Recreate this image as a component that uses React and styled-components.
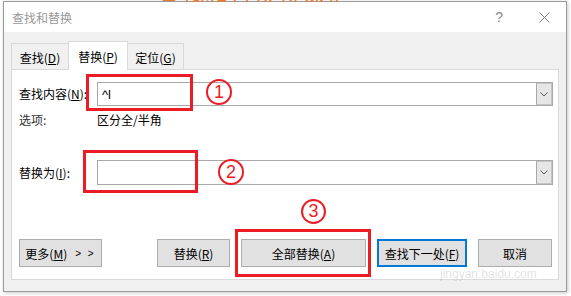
import React from "react"
import styled, { createGlobalStyle } from "styled-components"

const GlobalStyle = createGlobalStyle`
  html, body { margin: 0; padding: 0; background: #fff; }
  body {
    font-family: "Noto Sans CJK SC", "Noto Sans", sans-serif;
    font-size: 12px;
    color: #000;
  }
`

const Page = styled.div`
  position: relative;
  width: 571px;
  height: 296px;
  overflow: hidden;
  padding: 1px 0 0 3px;
  box-sizing: border-box;
`

// page text behind the dialog, only its lowest pixels peek out
const Headline = styled.div`
  position: absolute;
  left: 158px;
  top: 0;
  width: 180px;
  height: 2px;
  overflow: hidden;
  z-index: 3;
`

const HeadlineText = styled.div`
  margin-top: -19px;
  font-size: 22px;
  line-height: 22px;
  letter-spacing: 2px;
  color: #e8782e;
  white-space: nowrap;
`

const Dialog = styled.div`
  width: 564px;
  height: 291px;
  box-sizing: border-box;
  border: 1px solid #9a9a9a;
  box-shadow: 1px 1px 4px rgba(0, 0, 0, 0.22);
  display: flex;
  flex-direction: column;
  background: #f0f0f0;
`

const TitleBar = styled.div`
  height: 30px;
  background: #fff;
  display: flex;
  align-items: center;
  padding: 0 16px 0 8px;
  color: #999;
  font-size: 12px;
`

const TitleText = styled.span`
  flex: 1;
`

const Help = styled.span`
  font-family: "Liberation Sans", sans-serif;
  font-size: 14px;
  color: #8a8a8a;
  margin-right: 36px;
`

const Body = styled.div`
  flex: 1;
  display: flex;
  flex-direction: column;
  padding: 11px 7px 11px 7px;
`

const TabRow = styled.div`
  height: 26px;
  display: flex;
  align-items: flex-end;
`

const Tab = styled.div`
  position: relative;
  box-sizing: border-box;
  width: ${p => p.$w}px;
  height: ${p => (p.$active ? 29 : 26)}px;
  margin-bottom: ${p => (p.$active ? -1 : 0)}px;
  margin-left: ${p => (p.$first ? 0 : -1)}px;
  z-index: ${p => (p.$active ? 2 : 1)};
  border: 1px solid #d9d9d9;
  border-bottom: none;
  background: ${p => (p.$active ? "#fff" : "#f0f0f0")};
  display: flex;
  align-items: center;
  justify-content: center;
  padding-top: ${p => (p.$active ? 0 : 1)}px;
`

const Key = styled.span`
  text-decoration: underline;
  text-underline-offset: 1px;
`

const Panel = styled.div`
  height: 211px;
  box-sizing: border-box;
  background: #fff;
  border: 1px solid #d9d9d9;
  padding: 12px 5px 0 7px;
  display: flex;
  flex-direction: column;
`

const FieldRow = styled.div`
  display: grid;
  grid-template-columns: 78px 1fr;
  align-items: center;
  margin-top: ${p => p.$top || 0}px;
`

const Label = styled.span`
  color: ${p => p.$muted ? "#333" : "#000"};
  line-height: 14px;
`

const Combo = styled.div`
  height: ${p => p.$h}px;
  box-sizing: border-box;
  border: 1px solid #a8a8a8;
  display: flex;
  align-items: stretch;
`

const ComboText = styled.div`
  flex: 1;
  padding-left: 4px;
  display: flex;
  align-items: center;
  font-family: "Liberation Sans", sans-serif;
  font-size: 13px;
`

const DropButton = styled.div`
  width: 16px;
  box-sizing: border-box;
  background: #e6e6e6;
  border: 1px solid #c4c4c4;
  border-left: 1px solid #a8a8a8;
  display: flex;
  align-items: center;
  justify-content: center;
`

const ButtonRow = styled.div`
  display: flex;
  gap: 11px;
  margin-top: 54px;
  padding-right: 1px;
`

const Button = styled.div`
  width: ${p => p.$w}px;
  height: 28px;
  box-sizing: border-box;
  background: #e1e1e1;
  border: ${p => (p.$primary ? "2px solid #0078d7" : "1px solid #adadad")};
  display: flex;
  align-items: center;
  justify-content: center;
  margin-right: ${p => (p.$push ? "auto" : "0")};
  white-space: nowrap;
`

const Arrows = styled.span`
  font-family: "Liberation Sans", sans-serif;
  font-size: 10px;
  margin-left: 8px;
  letter-spacing: 2px;
`

const Mark = styled.div`
  position: absolute;
  left: ${p => p.$x}px;
  top: ${p => p.$y}px;
  width: ${p => p.$w}px;
  height: ${p => p.$h}px;
  box-sizing: border-box;
  border: 3px solid #ec1c24;
  z-index: 4;
`

const Step = styled.div`
  position: absolute;
  left: ${p => p.$x}px;
  top: ${p => p.$y}px;
  width: ${p => p.$d}px;
  height: ${p => p.$d}px;
  box-sizing: border-box;
  border: 2px solid #ec1c24;
  border-radius: 50%;
  color: #ec1c24;
  font-family: "Liberation Sans", sans-serif;
  font-size: 18px;
  display: flex;
  align-items: center;
  justify-content: center;
  z-index: 4;
`

const Watermark = styled.div`
  position: absolute;
  left: 440px;
  top: 268px;
  z-index: 5;
  color: rgba(170, 170, 170, 0.35);
  font-family: "Liberation Sans", sans-serif;
  font-size: 12px;
  line-height: 12px;
  pointer-events: none;
`

const Chevron = () => (
  <svg width="8" height="5" viewBox="0 0 8 5">
    <path d="M0.5 0.5 L4 4 L7.5 0.5" fill="none" stroke="#555" strokeWidth="1" />
  </svg>
)

const Close = () => (
  <svg width="11" height="11" viewBox="0 0 11 11">
    <path d="M0.5 0.5 L10.5 10.5 M10.5 0.5 L0.5 10.5" stroke="#777" strokeWidth="1" />
  </svg>
)

export default function App() {
  return (
    <>
      <GlobalStyle />
      <Page>
        <Headline><HeadlineText>查找和替换特殊格式的符号</HeadlineText></Headline>
        <Dialog>
          <TitleBar>
            <TitleText>查找和替换</TitleText>
            <Help>?</Help>
            <Close />
          </TitleBar>
          <Body>
            <TabRow>
              <Tab $w={58} $first>查找(<Key>D</Key>)</Tab>
              <Tab $w={60} $active>替换(<Key>P</Key>)</Tab>
              <Tab $w={57}>定位(<Key>G</Key>)</Tab>
            </TabRow>
            <Panel>
              <FieldRow>
                <Label>查找内容(<Key>N</Key>):</Label>
                <Combo $h={24}>
                  <ComboText>^l</ComboText>
                  <DropButton><Chevron /></DropButton>
                </Combo>
              </FieldRow>
              <FieldRow $top={7}>
                <Label $muted>选项:</Label>
                <Label>区分全/半角</Label>
              </FieldRow>
              <FieldRow $top={33}>
                <Label>替换为(<Key>I</Key>):</Label>
                <Combo $h={25}>
                  <ComboText />
                  <DropButton><Chevron /></DropButton>
                </Combo>
              </FieldRow>
              <ButtonRow>
                <Button $w={83} $push>更多(<Key>M</Key>)<Arrows>&gt; &gt;</Arrows></Button>
                <Button $w={73}>替换(<Key>R</Key>)</Button>
                <Button $w={125}>全部替换(<Key>A</Key>)</Button>
                <Button $w={90} $primary>查找下一处(<Key>F</Key>)</Button>
                <Button $w={74}>取消</Button>
              </ButtonRow>
            </Panel>
          </Body>
        </Dialog>

        <Mark $x={86} $y={74} $w={107} $h={37} />
        <Mark $x={83} $y={150} $w={115} $h={43} />
        <Mark $x={235} $y={229} $w={136} $h={48} />
        <Step $x={206} $y={79} $d={26}>1</Step>
        <Step $x={218} $y={159} $d={26}>2</Step>
        <Step $x={301} $y={199} $d={25}>3</Step>

        <Watermark>jingyan.baidu.com</Watermark>
      </Page>
    </>
  )
}
